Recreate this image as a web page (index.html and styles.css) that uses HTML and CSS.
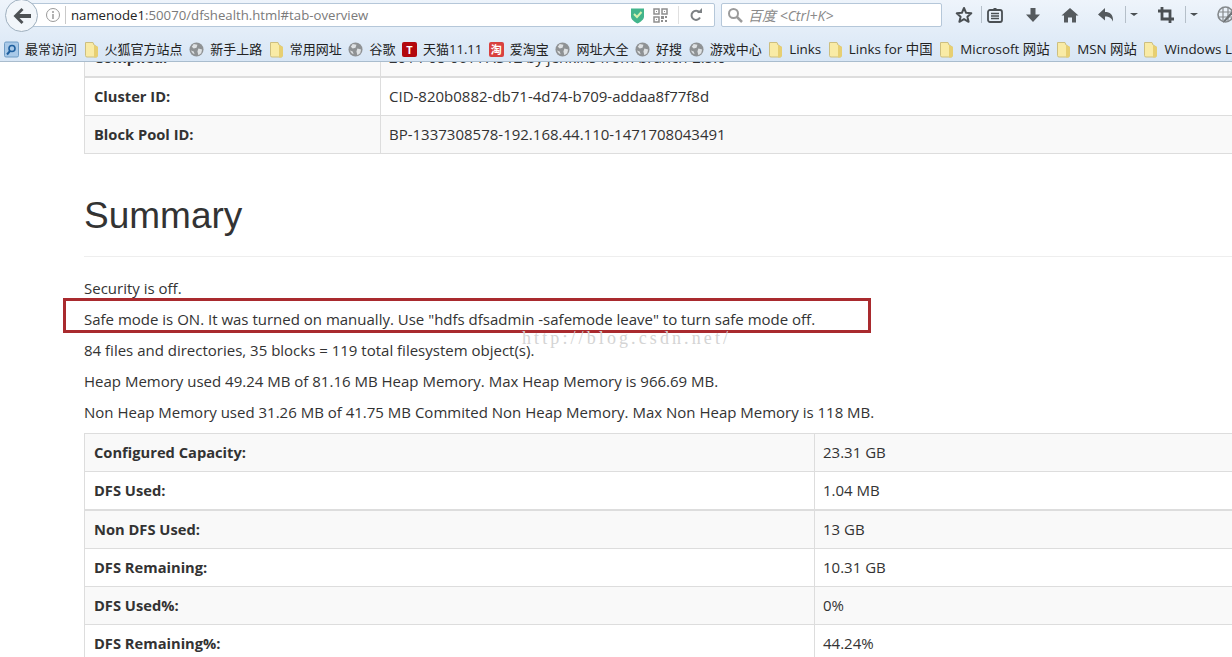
FILE: index.html
```html
<!DOCTYPE html>
<html lang="zh-CN">
<head>
    <meta charset="UTF-8">
    <title>namenode1:50070/dfshealth.html#tab-overview</title>
    <link rel="stylesheet" href="styles.css">
</head>
<body>

<svg class="defs" width="0" height="0">
    <symbol id="folder" viewBox="0 0 15 17">
        <path d="M1.500 1.500h7.500l1 2.500 3.500 2v8.500a1.500 1.500 0 0 1-1.500 1.500h-9a1.500 1.500 0 0 1-1.500-1.500z" fill="#f9eba6" stroke="#cdbf80"/>
        <path d="M10 4v12.500h2.500l1.500-2v-8.500z" fill="#e7cf72"/>
    </symbol>
    <symbol id="globe" viewBox="0 0 16 16">
        <circle cx="8" cy="8" r="7.500" fill="#8f9294"/>
        <path d="M5 2l4 1-1 3-3 1-2-2zM10 7l4 1-1 4-3 2-1-4zM2 9l3 1 1 3-2-1z" fill="#dfe2e4"/>
    </symbol>
</svg>

<div class="browser-bar">
    <div class="nav-row">
        <div class="url-box">
            <svg class="info-icon" width="16" height="16" viewBox="0 0 16 16">
                <circle cx="8" cy="8" r="6.500" fill="none" stroke="#9a9a9a"/>
                <path d="M8 4v2M8 7v5" stroke="#8a8a8a" stroke-width="1.300"/>
            </svg>
            <span class="url-sep"></span>
            <span class="url-text"><span class="url-host">namenode1</span>:50070/dfshealth.html#tab-overview</span>
            <svg class="shield" width="15" height="17" viewBox="0 0 15 17">
                <path d="M1 1.500h13v8c0 3-3.500 5.500-6.500 7-3-1.500-6.500-4-6.500-7z" fill="#43b58c"/>
                <path d="M4 7l3 3 4.500-5" fill="none" stroke="#d6f2b0" stroke-width="2"/>
            </svg>
            <svg class="qr" width="15" height="15" viewBox="0 0 15 15">
                <path d="M1 1h5v5h-5zM9 1h5v5h-5zM1 9h5v5h-5z" fill="none" stroke="#8e8e8e" stroke-width="1.500"/>
                <path d="M3 3h1v1h-1zM11 3h1v1h-1zM3 11h1v1h-1zM8 8h3v3h-3zM12 12h2v2h-2zM8 12h2v2h-2zM12 8h2v2h-2z" fill="#8e8e8e"/>
            </svg>
            <span class="url-sep url-sep-light"></span>
            <svg class="reload" width="14" height="14" viewBox="0 0 14 14">
                <path d="M11 9.500a4.500 4.500 0 1 1-.5-5" fill="none" stroke="#7d8184" stroke-width="2"/>
                <path d="M8 5h5v-5z" fill="#7d8184"/>
            </svg>
        </div>
        <div class="search-box">
            <svg width="16" height="16" viewBox="0 0 16 16">
                <circle cx="6.500" cy="6.500" r="4.500" fill="none" stroke="#9b9b9b" stroke-width="2"/>
                <path d="M10 10l5 5" stroke="#9b9b9b" stroke-width="2.500"/>
            </svg>
            <span class="search-text">百度 &lt;Ctrl+K&gt;</span>
        </div>
        <div class="tools">
            <svg class="tool-star" width="18" height="18" viewBox="0 0 18 18">
                <path d="M9 2l2.100 4.800 5.200.5-3.900 3.400 1.200 5.100-4.600-2.700-4.600 2.700 1.200-5.100-3.900-3.400 5.200-.5z" fill="none" stroke="#4a4f53" stroke-width="2" stroke-linejoin="round"/>
            </svg>
            <span class="tool-sep sep-star"></span>
            <svg class="tool-list" width="16" height="16" viewBox="0 0 16 16">
                <rect x="1" y="3" width="14" height="12" rx="2" fill="none" stroke="#4a4f53" stroke-width="1.800"/>
                <path d="M4 6.500h8M4 9h8M4 11.500h8" stroke="#4a4f53" stroke-width="1.300"/>
                <path d="M6.500 3v-2h3v2z" fill="#4a4f53"/>
            </svg>
            <svg class="tool-down" width="16" height="16" viewBox="0 0 16 16">
                <path d="M5.500 1h5v6.500h4.500l-7 7.500-7-7.500h4.500z" fill="#555a5e"/>
            </svg>
            <svg class="tool-home" width="18" height="16" viewBox="0 0 18 16">
                <path d="M9 1l8.500 7.500h-2.500v7h-4v-5h-4v5h-4v-7h-2.500z" fill="#555a5e"/>
            </svg>
            <svg class="tool-undo" width="16" height="16" viewBox="0 0 16 16">
                <path d="M7 1v4c5 0 8 2.500 8 8 0 .5 0 1-.2 1.500-1-3.500-3.500-5-7.800-5v4l-7-6z" fill="#555a5e"/>
            </svg>
            <span class="tool-sep sep-undo"></span>
            <span class="caret caret-undo"></span>
            <svg class="tool-crop" width="16" height="16" viewBox="0 0 16 16">
                <path d="M4 0v12h12M0 4h12v12" fill="none" stroke="#4a4f53" stroke-width="2.800"/>
            </svg>
            <span class="tool-sep sep-crop"></span>
            <span class="caret caret-crop"></span>
            <svg class="tool-globe" width="18" height="18" viewBox="0 0 18 18">
                <circle cx="8.500" cy="8.500" r="7.500" fill="none" stroke="#85898c" stroke-width="1.600"/>
                <path d="M1 6h15M1 11h15M6 1v15M11 1v15" stroke="#85898c" stroke-width="1.200"/>
                <path d="M17 6l-8 9-3 2 1-3 8-9z" fill="#6f7376"/>
            </svg>
        </div>
    </div>

    <div class="bookmarks">
        <span class="bm">
            <svg width="15" height="17" viewBox="0 0 15 17">
                <rect x=".5" y="1" width="14" height="15" rx="1.500" fill="#a9c9e8" stroke="#6f9cc5"/>
                <circle cx="8" cy="7.500" r="3" fill="none" stroke="#1f5f9e" stroke-width="1.600"/>
                <path d="M6 10l-3 3.500" stroke="#1f5f9e" stroke-width="2"/>
            </svg>最常访问
        </span>
        <span class="bm"><svg width="15" height="17"><use href="#folder"/></svg>火狐官方站点</span>
        <span class="bm"><svg width="15" height="15"><use href="#globe"/></svg>新手上路</span>
        <span class="bm"><svg width="15" height="17"><use href="#folder"/></svg>常用网址</span>
        <span class="bm"><svg width="15" height="15"><use href="#globe"/></svg>谷歌</span>
        <span class="bm"><span class="fav fav-t">T</span>天猫11.11</span>
        <span class="bm"><span class="fav fav-tao">淘</span>爱淘宝</span>
        <span class="bm"><svg width="15" height="15"><use href="#globe"/></svg>网址大全</span>
        <span class="bm"><svg width="15" height="15"><use href="#globe"/></svg>好搜</span>
        <span class="bm"><svg width="15" height="15"><use href="#globe"/></svg>游戏中心</span>
        <span class="bm bm-latin"><svg width="15" height="17"><use href="#folder"/></svg>Links</span>
        <span class="bm bm-latin"><svg width="15" height="17"><use href="#folder"/></svg>Links for 中国</span>
        <span class="bm bm-latin"><svg width="15" height="17"><use href="#folder"/></svg>Microsoft 网站</span>
        <span class="bm bm-latin"><svg width="15" height="17"><use href="#folder"/></svg>MSN 网站</span>
        <span class="bm bm-latin"><svg width="15" height="17"><use href="#folder"/></svg>Windows Live</span>
    </div>

    <div class="back-btn">
        <svg width="18" height="16" viewBox="0 0 18 16">
            <path d="M8.500 0l2 2-4 4h11.500v4h-11.500l4 4-2 2-8-8z" fill="#4d5154"/>
        </svg>
    </div>
</div>

<div class="page">
    <table class="info-table info-top">
        <tr class="odd"><th>Compiled:</th><td>2014-08-06T17:31Z by jenkins from branch-2.5.0</td></tr>
        <tr class="thick"><th>Cluster ID:</th><td>CID-820b0882-db71-4d74-b709-addaa8f77f8d</td></tr>
        <tr class="odd"><th>Block Pool ID:</th><td>BP-1337308578-192.168.44.110-1471708043491</td></tr>
    </table>

    <div class="page-header">
        <h1>Summary</h1>
    </div>

    <p>Security is off.</p>
    <p>Safe mode is ON. It was turned on manually. Use "hdfs dfsadmin -safemode leave" to turn safe mode off.</p>
    <p>84 files and directories, 35 blocks = 119 total filesystem object(s).</p>
    <p>Heap Memory used 49.24 MB of 81.16 MB Heap Memory. Max Heap Memory is 966.69 MB.</p>
    <p>Non Heap Memory used 31.26 MB of 41.75 MB Commited Non Heap Memory. Max Non Heap Memory is 118 MB.</p>

    <table class="info-table info-summary">
        <tr class="odd"><th>Configured Capacity:</th><td>23.31 GB</td></tr>
        <tr><th>DFS Used:</th><td>1.04 MB</td></tr>
        <tr class="odd thick"><th>Non DFS Used:</th><td>13 GB</td></tr>
        <tr><th>DFS Remaining:</th><td>10.31 GB</td></tr>
        <tr class="odd"><th>DFS Used%:</th><td>0%</td></tr>
        <tr><th>DFS Remaining%:</th><td>44.24%</td></tr>
    </table>

    <div class="red-box"></div>
    <div class="watermark">http://blog.csdn.net/</div>
</div>

</body>
</html>
```

FILE: styles.css
```css
html, body {
    margin: 0;
    height: 657px;
    overflow: hidden;
}

body {
    font-family: "Open Sans", "Noto Sans CJK SC", sans-serif;
    font-size: 15px;
    color: #333;
    background-color: #fff;
}

.defs {
    position: absolute;
}

/* browser chrome */
.browser-bar {
    position: relative;
    height: 62px;
    box-sizing: border-box;
    border-bottom: 1px solid #a9bccd;
    background: linear-gradient(#eef4fb, #d8e6f5);
}

.nav-row {
    display: flex;
    align-items: center;
    height: 38px;
    padding: 0 0 8px 30px;
    box-sizing: border-box;
}

.url-box {
    display: flex;
    align-items: center;
    width: 685px;
    height: 24px;
    box-sizing: border-box;
    background-color: #fff;
    border: 1px solid #b5c7d9;
    border-radius: 0 2px 2px 0;
}

.info-icon {
    margin-left: 14px;
}

.url-sep {
    width: 1px;
    height: 18px;
    margin: 0 5px 0 4px;
    background-color: #c9c9c9;
}

.url-sep-light {
    margin: 0 0 0 10px;
    background-color: #e0e0e0;
}

.url-text {
    flex: 1;
    font-size: 13.200px;
    color: #7a7a7a;
}

.url-host {
    color: #222;
}

.shield {
    margin-right: 8px;
}

.reload {
    margin: 0 11px 0 10px;
}

.search-box {
    display: flex;
    align-items: center;
    gap: 5px;
    width: 221px;
    height: 24px;
    box-sizing: border-box;
    margin-left: 6px;
    padding-left: 5px;
    background-color: #fff;
    border: 1px solid #b5c7d9;
    border-radius: 2px;
}

.search-text {
    font-size: 14px;
    font-style: italic;
    color: #8a8a8a;
}

.tools {
    position: relative;
    flex: 1;
    height: 30px;
}

.tools svg,
.tool-sep,
.caret {
    position: absolute;
}

.tool-star { left: 13px; top: 6px; }
.sep-star { left: 39px; }
.tool-list { left: 45px; top: 7px; }
.tool-down { left: 83px; top: 7px; }
.tool-home { left: 119px; top: 7px; }
.tool-undo { left: 156px; top: 7px; }
.sep-undo { left: 183px; }
.caret-undo { left: 188px; }
.tool-crop { left: 216px; top: 7px; }
.sep-crop { left: 243px; }
.caret-crop { left: 248px; }
.tool-globe { left: 275px; top: 6px; }

.tool-sep {
    top: 6px;
    width: 1px;
    height: 17px;
    background-color: #b5bfc9;
}

.caret {
    top: 13px;
    border-top: 3px solid #4a4f53;
    border-left: 4px solid transparent;
    border-right: 4px solid transparent;
}

.back-btn {
    position: absolute;
    left: 5px;
    top: -1px;
    display: flex;
    align-items: center;
    justify-content: center;
    width: 31px;
    height: 31px;
    background-color: #f2f6fa;
    border: 1px solid #9fb0bf;
    border-radius: 50%;
}

/* bookmarks toolbar */
.bookmarks {
    display: flex;
    align-items: center;
    gap: 6.600px;
    height: 23px;
    padding-left: 4px;
    font-size: 13px;
    line-height: 17px;
    color: #222;
    white-space: nowrap;
    overflow: hidden;
}

.bm {
    display: flex;
    align-items: center;
    gap: 6px;
}

.bm-latin {
    font-size: 13.400px;
}

.fav {
    display: block;
    width: 15px;
    height: 15px;
    border-radius: 2px;
    color: #fff;
    font-size: 11px;
    font-weight: bold;
    line-height: 15px;
    text-align: center;
}

.fav-t {
    background-color: #b3080e;
}

.fav-tao {
    background-color: #d9413f;
}

/* page content */
.page {
    position: relative;
    height: 595px;
    padding-left: 84px;
    overflow: hidden;
}

.info-table {
    width: 1300px;
    table-layout: fixed;
    border-collapse: collapse;
    border: 1px solid #ddd;
    line-height: 21px;
}

.info-top {
    margin-top: -24px;
}

.info-top th {
    width: 296px;
}

.info-summary th {
    width: 730px;
}

.info-table th,
.info-table td {
    height: 37px;
    padding: 8px;
    box-sizing: border-box;
    border: 1px solid #ddd;
    text-align: left;
}

.info-table th {
    padding-left: 9px;
    font-size: 14.700px;
    font-weight: bold;
}

.info-table .odd th,
.info-table .odd td {
    background-color: #f9f9f9;
}

.info-table .thick th,
.info-table .thick td {
    border-top-width: 2px;
}

.page-header {
    margin: 40px 0 21px;
    padding-bottom: 18px;
    border-bottom: 1px solid #eee;
}

h1 {
    margin: 0;
    font-family: "Liberation Sans", Arial, sans-serif;
    font-size: 37px;
    font-weight: 500;
    line-height: 44px;
}

p {
    margin: 0 0 10px;
    line-height: 21px;
}

.red-box {
    position: absolute;
    left: 63px;
    top: 236px;
    width: 802px;
    height: 29px;
    border: 3px solid #a92a2e;
}

.watermark {
    position: absolute;
    left: 522px;
    top: 266px;
    font-family: "Liberation Serif", serif;
    font-size: 18px;
    letter-spacing: 3.100px;
    color: #d4d4d4;
}
```
